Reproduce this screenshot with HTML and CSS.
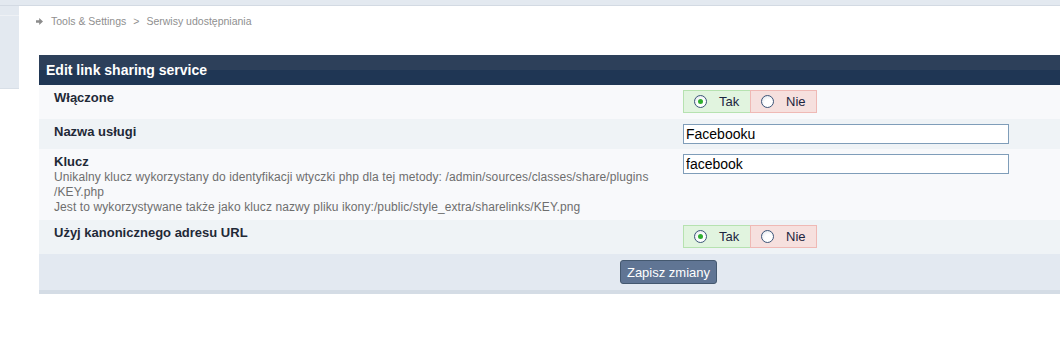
FILE: index.html
```html
<!DOCTYPE html>
<html lang="pl">
<head>
    <meta charset="UTF-8">
    <title>Serwisy udostępniania</title>
    <link rel="stylesheet" href="styles.css">
</head>
<body>
    <div class="topbar"></div>
    <div class="page">
        <div class="sidebar"><div class="sidebar-item"></div></div>

        <div class="main">
            <div class="breadcrumb">
                <svg class="crumb-arrow" width="7" height="7" viewBox="0 0 7 7"><path d="M0 2.2h3.2V0L7 3.5 3.2 7V4.8H0z" fill="#8c8c8c"/></svg>
                <a href="#">Tools &amp; Settings</a>
                <span class="sep">&gt;</span>
                <span>Serwisy udostępniania</span>
            </div>

            <form class="panel">
                <h2 class="panel-title">Edit link sharing service</h2>

                <div class="row">
                    <div class="label"><strong>Włączone</strong></div>
                    <div class="field">
                        <div class="yesno">
                            <label class="yes"><input type="radio" name="enabled" checked> Tak</label>
                            <label class="no"><input type="radio" name="enabled"> Nie</label>
                        </div>
                    </div>
                </div>

                <div class="row alt">
                    <div class="label"><strong>Nazwa usługi</strong></div>
                    <div class="field"><input class="text" type="text" value="Facebooku"></div>
                </div>

                <div class="row">
                    <div class="label has-desc">
                        <strong>Klucz</strong>
                        <div class="desc">Unikalny klucz wykorzystany do identyfikacji wtyczki php dla tej metody: /admin/sources/classes/share/plugins<br>/KEY.php<br>Jest to wykorzystywane także jako klucz nazwy pliku ikony:/public/style_extra/sharelinks/KEY.png</div>
                    </div>
                    <div class="field"><input class="text" type="text" value="facebook"></div>
                </div>

                <div class="row alt">
                    <div class="label"><strong>Użyj kanonicznego adresu URL</strong></div>
                    <div class="field">
                        <div class="yesno">
                            <label class="yes"><input type="radio" name="canonical" checked> Tak</label>
                            <label class="no"><input type="radio" name="canonical"> Nie</label>
                        </div>
                    </div>
                </div>

                <div class="panel-footer">
                    <button type="button" class="button">Zapisz zmiany</button>
                </div>
            </form>
        </div>
    </div>
</body>
</html>
```

FILE: styles.css
```css
/* General */
body {
    margin: 0;
    background: #fff;
    font-family: "Liberation Sans", Arial, sans-serif;
    overflow: hidden;
}

.topbar {
    height: 5px;
    background: #e3e9f0;
    border-bottom: 1px solid #d3dae3;
}

.page {
    display: flex;
}

/* Left menu peeking out */
.sidebar {
    width: 19px;
    height: 83px;
    flex-shrink: 0;
    background: #e3e9f0;
    border-bottom: 1px solid #d8dfe7;
    box-sizing: border-box;
}

.sidebar-item {
    height: 9px;
    border-bottom: 1px solid #eef1f5;
}

/* the page is wider than the window, clip it */
.main {
    flex: 1;
    min-width: 0;
    overflow: hidden;
    padding: 10px 0 0 20px;
}

/* Breadcrumb */
.breadcrumb {
    display: flex;
    align-items: center;
    font-size: 10.5px;
    line-height: 11px;
    color: #8f8f8f;
    margin-left: -3px;
}

.crumb-arrow {
    margin-right: 8px;
}

.breadcrumb a {
    color: #8f8f8f;
    text-decoration: none;
}

.breadcrumb .sep {
    margin: 0 7px;
}

/* Panel */
.panel {
    margin: 28px 0 0;
    width: 1259px;
}

.panel-title {
    margin: 0;
    height: 30px;
    line-height: 30px;
    padding-left: 7px;
    font-size: 14px;
    color: #fff;
    background: linear-gradient(to bottom, #2d405a 50%, #1f3654 50%);
}

.row {
    display: grid;
    grid-template-columns: 638px 1fr;
    background: #f8f9fb;
}

.row.alt {
    background: #eff3f6;
}

.label {
    padding: 6px 8px 6px 15px;
    font-size: 13px;
    line-height: 14px;
    color: #1f2937;
}

.label.has-desc {
    padding-bottom: 5px;
}

.desc {
    margin-top: 1px;
    font-size: 12px;
    line-height: 15px;
    letter-spacing: 0.1px;
    color: #6e6e6e;
}

.field {
    padding: 5px 6px;
}

.text {
    box-sizing: border-box;
    width: 326px;
    height: 20px;
    margin: 0;
    padding: 0 2px;
    border: 1px solid #7f9db9;
    background: #fff;
    font-family: "Liberation Sans", Arial, sans-serif;
    font-size: 14px;
    color: #000;
}

/* Yes / No toggle */
.yesno {
    display: inline-flex;
    margin-bottom: 1px;
}

.yesno label {
    box-sizing: border-box;
    width: 67px;
    height: 23px;
    display: flex;
    align-items: center;
    gap: 12px;
    padding-left: 10px;
    font-size: 13px;
    color: #1c2540;
}

.yesno .yes {
    background: #e1f4df;
    border: 1px solid #b6e2b0;
    border-right: none;
}

.yesno .no {
    background: #f6e0de;
    border: 1px solid #efb9b5;
}

.yesno input {
    appearance: none;
    margin: 0;
    width: 13px;
    height: 13px;
    border-radius: 50%;
    border: 1px solid #3c5579;
    background: radial-gradient(circle at 60% 65%, #fff 40%, #d8dde6 100%);
    display: grid;
    place-items: center;
}

.yesno input:checked::after {
    content: "";
    width: 5px;
    height: 5px;
    border-radius: 50%;
    background: #2fae2f;
}

/* Footer */
.panel-footer {
    background: #e3e9f1;
    border-bottom: 4px solid #d4dce5;
    padding: 6px 0;
    text-align: center;
}

.button {
    height: 24px;
    padding: 0 6px;
    background: #607594;
    border: 1px solid #44586f;
    border-radius: 3px;
    color: #fff;
    font-family: "Liberation Sans", Arial, sans-serif;
    font-size: 13px;
    cursor: pointer;
}
```
